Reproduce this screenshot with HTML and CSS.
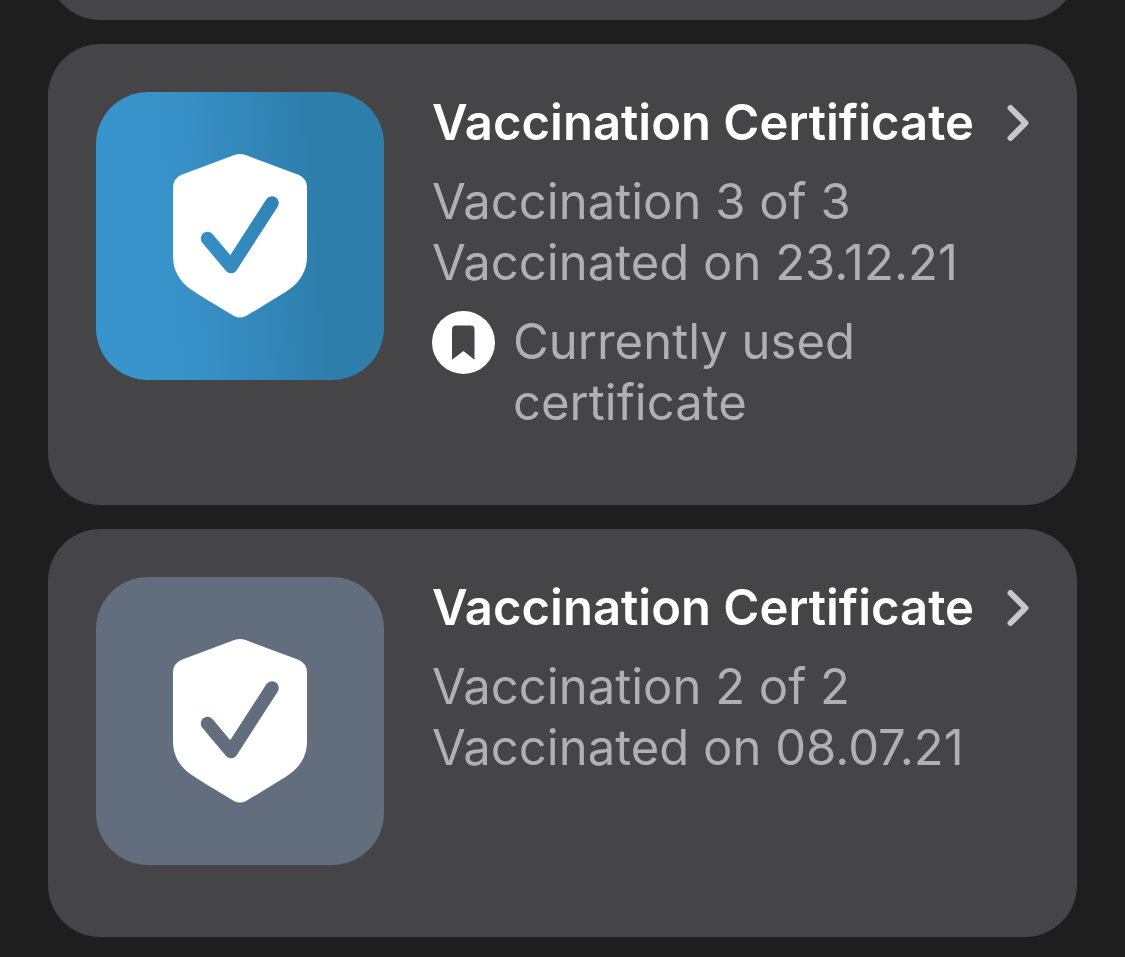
FILE: index.html
```html
<!DOCTYPE html>
<html lang="en">
<head>
<meta charset="utf-8">
<meta name="viewport" content="width=device-width, initial-scale=1">
<title>Certificates</title>
<link rel="stylesheet" href="styles.css">
</head>
<body>
<svg class="sprite" aria-hidden="true">
  <defs>
    <mask id="check-cutout" maskUnits="userSpaceOnUse" x="0" y="0" width="134" height="165">
      <rect width="134" height="165" fill="#fff"/>
      <path d="M34.5 84.500 58 112.500 99 49" fill="none" stroke="#000" stroke-width="13.500" stroke-linecap="round" stroke-linejoin="round"/>
    </mask>
    <symbol id="shield" viewBox="0 0 134 165">
      <path mask="url(#check-cutout)" fill="#fff" d="M62 .8Q67-.8 72 .8L126 21Q134 25 134 33V102C134 116 128 127 116 135.500C108 141 88 153 73 162Q67 165 61 162C46 153 26 141 18 135.500C6 127 0 116 0 102V33Q0 25 8 21Z"/>
    </symbol>
    <symbol id="chevron" viewBox="0 0 23 38">
      <path d="M4.500 4 19.500 19 4.500 34" fill="none" stroke="currentColor" stroke-width="6" stroke-linecap="round" stroke-linejoin="round"/>
    </symbol>
  </defs>
</svg>
<main class="list">
  <div class="card card-previous"></div>
  <a class="card" href="#certificate-3">
    <span class="tile tile-active"><svg class="shield" aria-hidden="true"><use href="#shield"/></svg></span>
    <div class="details">
      <div class="heading">
        <h2 class="title">Vaccination Certificate</h2>
        <svg class="chevron" aria-hidden="true"><use href="#chevron"/></svg>
      </div>
      <p class="text">Vaccination 3 of 3<br>Vaccinated on 23.12.21</p>
      <div class="status">
        <svg class="bookmark" viewBox="0 0 63 63" aria-hidden="true">
          <circle cx="31.500" cy="31.500" r="31.500" fill="#fff"/>
          <path fill="#454547" d="M20 48V18.500Q20 14.500 24 14.500H38.500Q42.500 14.500 42.500 18.500V48Q42.500 49 41.500 48L31.500 40 21 48Q20 49 20 48Z"/>
        </svg>
        <p class="text">Currently used certificate</p>
      </div>
    </div>
  </a>
  <a class="card" href="#certificate-2">
    <span class="tile"><svg class="shield" aria-hidden="true"><use href="#shield"/></svg></span>
    <div class="details">
      <div class="heading">
        <h2 class="title">Vaccination Certificate</h2>
        <svg class="chevron" aria-hidden="true"><use href="#chevron"/></svg>
      </div>
      <p class="text">Vaccination 2 of 2<br>Vaccinated on 08.07.21</p>
    </div>
  </a>
</main>
</body>
</html>
```

FILE: styles.css
```css
* {
  box-sizing: border-box;
}

body {
  margin: 0;
  background: #1e1e1e;
  font-family: Inter, "Liberation Sans", sans-serif;
  font-size: 49px;
  line-height: 61px;
}

.sprite {
  position: absolute;
  width: 0;
  height: 0;
}

.list {
  display: flex;
  flex-direction: column;
  gap: 24px;
  padding: 0 48px 20px;
}

.card {
  display: flex;
  align-items: flex-start;
  gap: 48px;
  padding: 48px 48px 72px;
  border-radius: 52px;
  background: #454547;
  color: #b0b0b2;
  text-decoration: none;
}

/* Only the lower edge of the preceding card is scrolled into view. */
.card-previous {
  margin-top: -100px;
}

.tile {
  display: flex;
  flex: none;
  align-items: center;
  justify-content: center;
  width: 288px;
  height: 288px;
  border-radius: 52px;
  background: #626e7e;
}

.tile-active {
  background: linear-gradient(85deg, #3994cd 0%, #3892ca 30%, #2e7eab 75%, #2e7eab 100%);
}

.shield {
  width: 134px;
  height: 165px;
}

.details {
  display: flex;
  flex: 1;
  flex-direction: column;
  gap: 18px;
  min-width: 0;
}

.heading {
  display: flex;
  align-items: center;
  justify-content: space-between;
}

.title {
  margin: 0;
  color: #fff;
  font-size: 49px;
  font-weight: 600;
}

.chevron {
  flex: none;
  width: 23px;
  height: 38px;
  color: #c8c8ca;
}

.text {
  margin: 0;
}

.status {
  display: flex;
  align-items: flex-start;
  gap: 18px;
}

.bookmark {
  flex: none;
  width: 63px;
  height: 63px;
}
```
